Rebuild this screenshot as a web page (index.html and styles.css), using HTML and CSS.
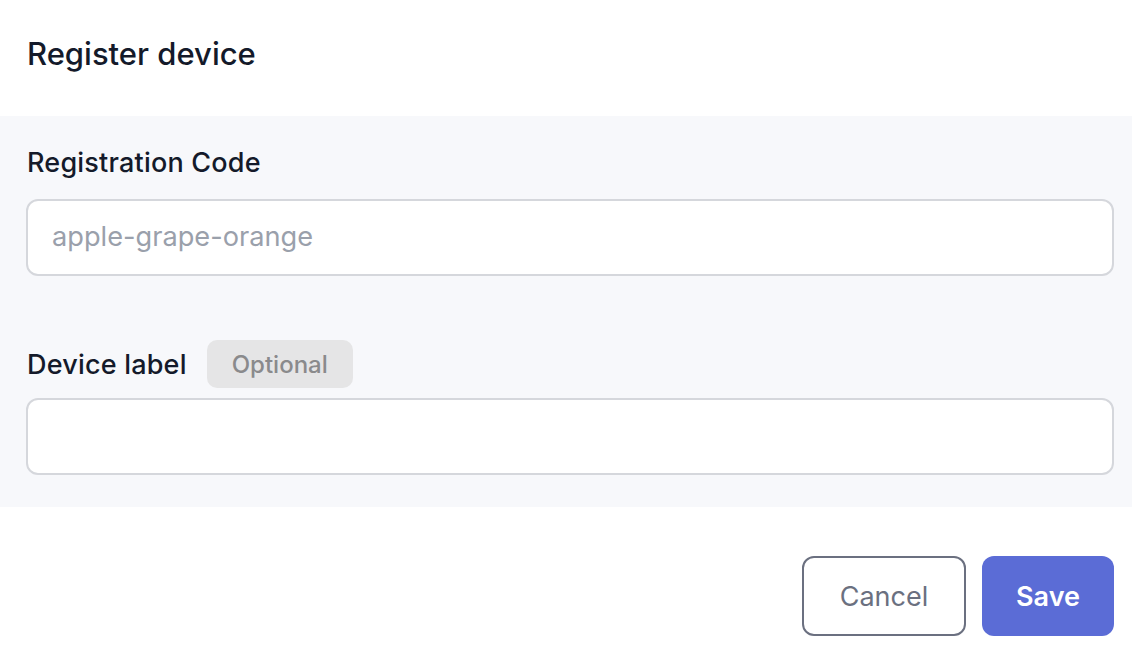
FILE: index.html
```html
<!DOCTYPE html>
<html>
<head>
<meta charset="utf-8">
<link rel="stylesheet" href="styles.css">
</head>
<body>
<div class="modal">
  <div class="modal-header">
    <h1 class="title">Register device</h1>
  </div>
  <div class="modal-body">
    <div class="field">
      <div class="label-row"><label class="label">Registration Code</label></div>
      <div class="input"><span class="placeholder">apple-grape-orange</span></div>
    </div>
    <div class="field field-second">
      <div class="label-row"><label class="label">Device label</label><span class="badge">Optional</span></div>
      <div class="input"></div>
    </div>
  </div>
  <div class="modal-footer">
    <button class="btn btn-cancel">Cancel</button>
    <button class="btn btn-save">Save</button>
  </div>
</div>
</body>
</html>
```
FILE: styles.css
```css
* { box-sizing: border-box; }
html, body { margin: 0; padding: 0; background: #ffffff; }
body { font-family: Inter, "Noto Sans", "Liberation Sans", sans-serif; color: #141a2a; width: 1132px; height: 650px; overflow: hidden; }
.modal { display: flex; flex-direction: column; }
.modal-header { height: 116px; display: flex; align-items: center; padding: 0 18px 10px 27px; }
.title { margin: 0; font-size: 31px; font-weight: 500; letter-spacing: 0; color: #141a2a; }
.modal-body { height: 391px; background: #f7f8fb; padding: 30px 18px 0 26px; display: flex; flex-direction: column; }
.field { display: flex; flex-direction: column; }
.field-second { margin-top: 64px; }
.label-row { display: flex; align-items: center; min-height: 32px; margin-bottom: 20px; }
.field-second .label-row { min-height: 48px; margin-bottom: 10px; }
.label { font-size: 27px; font-weight: 500; letter-spacing: 0.2px; color: #141a2a; padding-left: 1px; }
.badge { margin-left: 20px; height: 48px; padding: 0 25px; background: #e5e5e6; border-radius: 10px; display: flex; align-items: center; font-size: 24px; font-weight: 500; color: #8a8a8c; }
.input { height: 77px; background: #ffffff; border: 2px solid #d5d7dc; border-radius: 12px; display: flex; align-items: center; padding-left: 24px; }
.placeholder { font-size: 27.2px; color: #9aa0ab; padding-bottom: 2px; }
.modal-footer { display: flex; justify-content: flex-end; gap: 16px; padding: 49px 18px 14px; }
.btn { height: 80px; border-radius: 12px; font-family: inherit; font-size: 27px; display: flex; align-items: center; justify-content: center; }
.btn-cancel { width: 164px; background: #ffffff; border: 2px solid #6b7080; color: #6b7080; font-weight: 400; }
.btn-save { width: 132px; background: #5b6cd6; border: none; color: #ffffff; font-weight: 600; }
```
